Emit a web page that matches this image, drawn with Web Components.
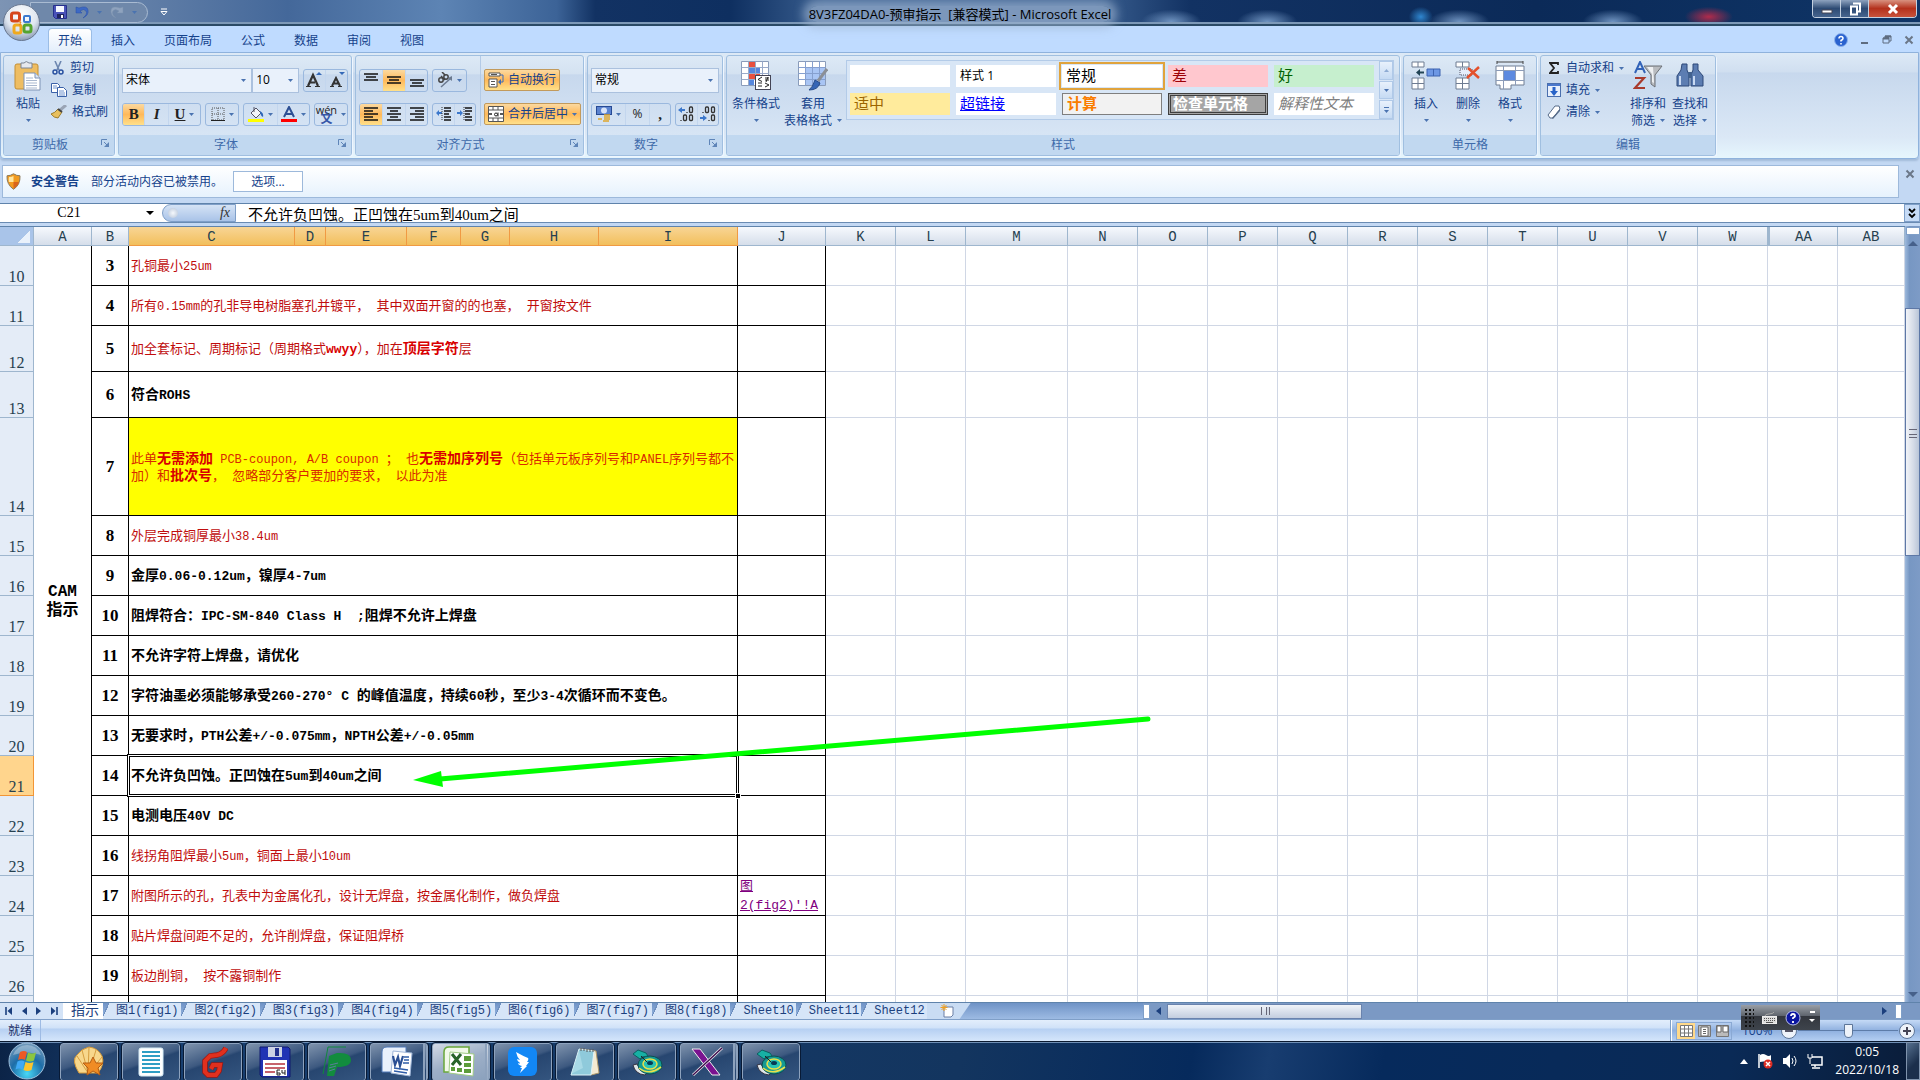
<!DOCTYPE html>
<html lang="zh-CN">
<head>
<meta charset="utf-8">
<title>8V3FZ04DA0-预审指示 [兼容模式] - Microsoft Excel</title>
<style>
  html, body {
    height: 100%;
    margin: 0;
  }
  body {
    background: #c3d8f3;
    color: #15428b;
    font: 12px/16px "Open Sans", "Noto Sans CJK SC", sans-serif;
    overflow: hidden;
  }
</style>
</head>
<body>
<excel-app></excel-app>

<script>
const base = `
  * { box-sizing: border-box; }
  button, input, select { font: inherit; color: inherit; }
  button {
    align-items: center;
    background: none;
    border: 0;
    display: flex;
    justify-content: center;
    padding: 0;
    white-space: nowrap;
  }
  input, select { border-radius: 0; outline: none; }
`;

class Part extends HTMLElement {
  constructor() {
    super();
    this.attachShadow({ mode: 'open' });
    const template = document.createElement('template');
    template.innerHTML = `<style>${base}${this.css()}</style>${this.html()}`;
    this.shadowRoot.appendChild(template.content.cloneNode(true));
  }

  css() { return ''; }

  html() { return '<slot></slot>'; }
}

const lines = (rows) => rows.map(([x1, x2, y]) => `<path d="M${x1} ${y}H${x2}" stroke="#111" stroke-width="1.6"/>`).join('');

const disc = `
  <path d="M2 19q2 9 12 10l3-3q-8-1-11-8z" fill="#dfe6e8" stroke="#334" />
  <ellipse cx="19" cy="19" rx="12" ry="9" fill="#149a94" stroke="#0b4f50"/>
  <path d="M8 22q10 8 22-1" stroke="#e8e04a" stroke-width="1.6" fill="none"/>
  <ellipse cx="19" cy="18" rx="7" ry="5" fill="#28c2b4" stroke="#e8e04a" stroke-width="1.5"/>
  <ellipse cx="19" cy="17" rx="3" ry="2" fill="#063a55"/>
  <path d="M2 8l5-4 8 3 2 3-6 1-2 2z" fill="#17b0a4" stroke="#0b5f60"/><path d="M10 10l6 6" stroke="#222"/>`;

// name: [width, height, markup]
const icons = {
  caret: [5, 3, '<path d="M0 0h5L2.500 3z" fill="#4a73b0"/>'],
  launcher: [8, 8, '<path d="M.5 6V.5H6M3 3l3 3" fill="none" stroke="#5f85b8"/><path d="M8 3v5H3z" fill="#5f85b8"/>'],
  save: [14, 14, '<path d="M.5.5h13v13h-11l-2-2z" fill="#4a53b8" stroke="#26308c"/><path d="M3 1h8v6H3z" fill="#f4f7ff"/><path d="M4 9h7v4H4z" fill="#20265e"/><path d="M8 10h2v3H8z" fill="#fff"/>'],
  undo: [14, 14, '<path d="M1 2v6h6L5 6q4-3 6 0t-3 7q6-3 5-8T4 3z" fill="#3d69c4" stroke="#2a4fa4" stroke-width=".5"/>'],
  redo: [14, 14, '<path d="M13 2v6H7l2-2q-4-3-6 0t3 7Q0 10 1 5t9-2z" fill="#8fa3be" stroke="#7b90ad" stroke-width=".5"/>'],
  qat: [8, 8, '<path d="M1 1h6" stroke="#fff"/><path d="M1 3.500h6L4 7z" fill="none" stroke="#fff"/>'],
  orb: [37, 37, `<defs><radialGradient id="o" cx=".5" cy=".3" r=".7"><stop offset="0" stop-color="#fff"/><stop offset=".6" stop-color="#dfe6f0"/><stop offset="1" stop-color="#8b9bb5"/></radialGradient></defs>
    <circle cx="18.500" cy="18.500" r="18" fill="url(#o)" stroke="#67768f"/>
    <g fill="none" stroke-width="3"><rect x="8.500" y="9" width="8" height="8" rx="2" stroke="#d6461c"/><rect x="11" y="21" width="7" height="8" rx="2" stroke="#f0a91e"/><rect x="21" y="21" width="7" height="7" rx="2" stroke="#54a42f"/></g>
    <rect x="21" y="12" width="6" height="6" rx="1" fill="none" stroke="#3b79cf" stroke-width="2"/><path d="M16 17l2 2M16 21l2-1" stroke="#e98b22" stroke-width="1.500"/>`],
  help: [14, 14, '<circle cx="7" cy="7" r="6.500" fill="#2a62cf" stroke="#8db2ec"/><path d="M5 5.500q0-2 2-2t2 2q0 1-2 2v1M7 10v1.500" stroke="#fff" stroke-width="1.500" fill="none"/>'],
  helpNavy: [16, 16, '<circle cx="8" cy="8" r="7" fill="#0c16a0" stroke="#b8c0ea"/><path d="M6 6q0-2 2-2t2 2q0 1-2 2v1M8 11v2" stroke="#fff" stroke-width="1.800" fill="none"/>'],
  min: [10, 10, '<path d="M1 8h7" stroke="#5e6c80" stroke-width="2"/>'],
  restore: [10, 10, '<path d="M3 3V1h6v5H7M1 3h6v5H1z" fill="none" stroke="#5e6c80"/><path d="M1 3.500h6M3 1.500h6" stroke="#5e6c80" stroke-width="2"/>'],
  close: [10, 10, '<path d="M1.500 1.500l7 7M8.500 1.500l-7 7" stroke="#6b7788" stroke-width="2"/>'],
  wmin: [12, 12, '<path d="M1 7h10v3H1z" fill="#fff" stroke="#445"/>'],
  wrestore: [12, 14, '<path d="M4 1.500h7v8H9" fill="none" stroke="#fff" stroke-width="2"/><path d="M2 4.500h6v8H2z" fill="none" stroke="#fff" stroke-width="2"/>'],
  wclose: [12, 12, '<path d="M2 2l8 8M10 2l-8 8" stroke="#fff" stroke-width="3"/>'],
  paste: [28, 30, '<rect x="1" y="3" width="23" height="25" rx="2" fill="#eebd62" stroke="#c38f35"/><path d="M7 2h3q2-3 5 0h3v5H7z" fill="#e6e9ee" stroke="#7b8594"/><path d="M10 12h11l5 5v12H10z" fill="#fff" stroke="#7e93b5"/><path d="M21 12v5h5" fill="#dbe5f3" stroke="#7e93b5"/><path d="M12 17h7M12 19.500h11M12 22h11M12 24.500h11M12 27h11" stroke="#a9b8cf"/>'],
  cut: [14, 14, '<path d="M4 0l4 9M10 0L6 9" stroke="#6d87b0" stroke-width="1.600"/><circle cx="4" cy="11" r="2" fill="none" stroke="#2850a0" stroke-width="1.500"/><circle cx="10" cy="11" r="2" fill="none" stroke="#2850a0" stroke-width="1.500"/>'],
  copy: [16, 14, '<path d="M.5.5h6l2 2v7h-8z" fill="#fff" stroke="#3b61a8"/><path d="M6.500 4.500h6l3 3v6h-9z" fill="#fff" stroke="#3b61a8"/><path d="M2 3h4M2 5h4M8 8h5M8 10h6M8 12h6" stroke="#6f93cf"/>'],
  brush: [16, 14, '<path d="M15 0l-7 6" stroke="#9aa4b5" stroke-width="3"/><path d="M7 4l4 3-4 6q-4 0-7-4 4-1 7-5z" fill="#e9c05e" stroke="#9c7c2c"/><path d="M7 4l4 3" stroke="#444" stroke-width="2"/>'],
  grow: [16, 16, '<path d="M2 14L7 3l5 11M4 10.500h5" stroke="#333" stroke-width="2.200" fill="none"/><path d="M0 14.500h5M9 14.500h5" stroke="#333"/><path d="M10 3h6l-3-3z" fill="#3569b8"/>'],
  shrink: [16, 16, '<path d="M3 14l4-8 4 8M5 11.500h4" stroke="#333" stroke-width="2" fill="none"/><path d="M1 14.500h4M9 14.500h4" stroke="#333"/><path d="M10 0h6l-3 3z" fill="#3569b8"/>'],
  borders: [14, 14, '<path d="M1 1h12v12H1zM7 1v12M1 7h12" fill="none" stroke="#555" stroke-dasharray="1 1"/><path d="M0 13.500h14" stroke="#222"/>'],
  fill: [16, 16, '<path d="M3 7l5-5 5 5-5 5z" fill="#f2f5fa" stroke="#556"/><path d="M6 1v5" stroke="#556"/><path d="M12 5q4 2 3 6-2-1-3-4z" fill="#2c66b8"/><path d="M0 13h16v3H0z" fill="#ff0"/>'],
  color: [16, 16, '<path d="M3 11L8 1l5 10M5 8h6" stroke="#2c4f94" stroke-width="2" fill="none"/><path d="M0 13h16v3H0z" fill="#f00"/>'],
  top: [16, 16, lines([[1, 15, 2], [3, 13, 5], [1, 15, 8]])],
  middle: [16, 16, lines([[1, 15, 5], [3, 13, 8], [1, 15, 11]])],
  bottom: [16, 16, lines([[1, 15, 8], [3, 13, 11], [1, 15, 14]])],
  left: [16, 14, lines([[1, 15, 1], [1, 10, 4], [1, 15, 7], [1, 10, 10], [1, 15, 13]])],
  center: [16, 14, lines([[1, 15, 1], [4, 12, 4], [1, 15, 7], [4, 12, 10], [1, 15, 13]])],
  right: [16, 14, lines([[1, 15, 1], [6, 15, 4], [1, 15, 7], [6, 15, 10], [1, 15, 13]])],
  outdent: [16, 14, lines([[8, 15, 1], [8, 15, 4], [8, 13, 7], [8, 15, 10], [8, 15, 13]]) + '<path d="M6 3v2h0v2H3v2L0 6l3-3v2h3" fill="#3c78cc"/><path d="M6 0v14" stroke="#333" stroke-dasharray="1 1"/>'],
  indent: [16, 14, lines([[8, 15, 1], [8, 15, 4], [8, 13, 7], [8, 15, 10], [8, 15, 13]]) + '<path d="M0 5h3V3l3 3-3 3V7H0z" fill="#3c78cc"/><path d="M7 0v14" stroke="#333" stroke-dasharray="1 1"/>'],
  orient: [16, 16, '<g fill="none" stroke="#444" stroke-width="1.500"><circle cx="4" cy="8" r="2.200"/><path d="M4 4l4 4"/><circle cx="9" cy="5" r="2.200"/><path d="M5 0l3 3"/><path d="M4 15L14 6" stroke="#6b7a90"/></g><path d="M15 4v5l-4-3z" fill="#6b7a90"/>'],
  wrap: [16, 16, '<path d="M1 1h11v3H1zM1 7h8v8H1z" fill="#fff" stroke="#555"/><path d="M3 9.500h4M3 12.500h4M3 2.500h6" stroke="#555"/><path d="M12 3h3v7h-3" fill="none" stroke="#3c6bb8"/><path d="M13 7v6l-3-3z" fill="#3c6bb8"/>'],
  merge: [16, 16, '<path d="M.5.500h15v15H.5zM.5 4h15M.5 12h15M5 .5V4M10 .5V4M5 12v3.500M10 12v3.500" fill="#fff" stroke="#555"/><path d="M1 8h3M15 8h-3" stroke="#222" stroke-width="1.500"/><circle cx="8" cy="8.500" r="1.500" fill="none" stroke="#222"/><path d="M10 6.500v4" stroke="#222"/>'],
  money: [16, 16, '<rect x=".5" y=".5" width="15" height="8" fill="#5b83cf" stroke="#274a94"/><circle cx="8" cy="4.500" r="3" fill="#d7e3f8"/><path d="M8 9h6M8 11h6M8 13h6M7 15h6M2 13h4" stroke="#e0a62c" stroke-width="1.600"/>'],
  decup: [17, 16, '<path d="M0 4l4-3v2h3v2H4v2z" fill="#3c78cc"/><g fill="none" stroke="#333" stroke-width="1.300"><path d="M9 6v1"/><rect x="11.500" y="1" width="3" height="5.500" rx="1"/><path d="M3 14v1"/><rect x="5.500" y="9" width="3" height="5.500" rx="1"/><rect x="11.500" y="9" width="3" height="5.500" rx="1"/></g>'],
  decdown: [17, 16, '<path d="M7 12l-4-3v2H0v2h3v2z" fill="#3c78cc"/><g fill="none" stroke="#333" stroke-width="1.300"><path d="M3 6v1"/><rect x="5.500" y="1" width="3" height="5.500" rx="1"/><rect x="11.500" y="1" width="3" height="5.500" rx="1"/><path d="M9 14v1"/><rect x="11.500" y="9" width="3" height="5.500" rx="1"/></g>'],
  cond: [30, 30, '<path d="M.5.500h27v24H.5z" fill="#fff" stroke="#8a9cba"/><path d="M7 1h7v6H7zM7 13h12v6H7z" fill="#e8503e"/><path d="M7 7h12v6H7zM7 19h6v5H7z" fill="#5687dd"/><path d="M.5 6.500h27M.5 12.500h27M.5 18.500h27M7.500.5v24M14.500.5v24M21.500.5v24" stroke="#9aabca" fill="none"/><rect x="14.500" y="14.500" width="15" height="14" fill="#fff" stroke="#445"/><path d="M21 16l-4 2.500 4 2M17 22h4M24 17h4M24 19h4M27 16l-2 5M17 25h4M24 22l4 2-4 2" stroke="#222" fill="none"/>'],
  tablefmt: [30, 30, '<path d="M.5.500h27v24H.5z" fill="#fff" stroke="#8a9cba"/><path d="M7 7h20v17H7z" fill="#a9c5f4"/><path d="M.5 6.500h27M.5 12.500h27M.5 18.500h27M7.500.5v24M14.500.5v24M21.500.5v24" stroke="#86a0cf" fill="none"/><path d="M29 8l-9 12" stroke="#8b8f96" stroke-width="3"/><path d="M17 19l5 3q-2 7-11 7 4-3 6-10z" fill="#3565b5" stroke="#264a88"/>'],
  insert: [30, 30, '<path d="M1 1h12v5H1zM1 17h12v11H1zM7 1v5M7 17v11M1 22.500h12" fill="#fff" stroke="#6e7c92"/><path d="M16 8h13v7H16z" fill="#6d97e4" stroke="#3d63b0"/><path d="M22.500 8v7" stroke="#3d63b0"/><path d="M13 11.500H8" stroke="#245" stroke-width="2"/><path d="M9 8v7l-4-3.500z" fill="#245"/>'],
  remove: [26, 30, '<path d="M1 1h13v5H1zM1 17h13v11H1zM7.500 1v5M7.500 17v11M1 22.500h13" fill="#fff" stroke="#6e7c92"/><path d="M5 8h12v6H5z" fill="#e6eefb" stroke="#556" stroke-dasharray="1 1"/><path d="M13 7l11 10M24 6L12 17" stroke="#e4512c" stroke-width="2.500"/>'],
  format: [30, 30, '<path d="M2 1h26M2 0v3M28 0v3" stroke="#444"/><path d="M1 5h28v19H16v4H5v-4H1z" fill="#fff" stroke="#6e7c92"/><path d="M1 9.500h28M1 19.500h28M8.500 5v23M20.500 5v19" stroke="#8b9bb8"/><path d="M9 10h11v9H9z" fill="#5d8ae0"/>'],
  sum: [10, 12, '<path d="M9 3V1H1l4 5-4 5h8V9" fill="none" stroke="#222" stroke-width="1.800"/>'],
  down: [14, 14, '<rect x=".5" y=".5" width="13" height="13" fill="#e8f0fc" stroke="#4a6fae"/><path d="M1 1h12v2H1z" fill="#4a78cc"/><path d="M7 4v5" stroke="#2863c8" stroke-width="3"/><path d="M3 8h8l-4 5z" fill="#2863c8"/>'],
  eraser: [14, 14, '<path d="M1 10l7-9h4l1 3-7 9H3z" fill="#fff" stroke="#556a88"/><path d="M5 13l8-9v2l-7 8z" fill="#556a88"/>'],
  sort: [30, 30, '<path d="M2 12L7 1l5 11M4 8h6" fill="none" stroke="#3263b8" stroke-width="2"/><path d="M2 17h9L2 27h10" fill="none" stroke="#a83a2c" stroke-width="2.200"/><path d="M11 5h18l-7 9v12l-4-3v-9z" fill="#b9bcc0" stroke="#6d7176"/><path d="M14 6h6l1 16-2-1v-8z" fill="#eef0f2"/>'],
  find: [28, 28, '<path d="M6 2h5v6l2 5v11H1V14l4-6zM17 2h5v6l5 6v10H15V13l2-5z" fill="#5c7db2" stroke="#2d4878"/><path d="M4 14v9M18 14v9" stroke="#c9daf3" stroke-width="2"/><path d="M12 10h4v6h-4z" fill="#41618f"/>'],
  shield: [15, 17, '<path d="M7.500.8q3 2 6.500 2 .5 9-6.500 13.500Q.5 11.500 1 2.800q3.500 0 6.500-2z" fill="#f29a1f" stroke="#8c7a5a"/><path d="M3 4q3 0 4.500-1v6H2.800q-.3-3 .2-5z" fill="#ffe6a0"/><path d="M7.500 9H13q-1 4-5.500 6.500z" fill="#d9651b"/>'],
  start: [38, 38, `<defs><radialGradient id="s" cx=".5" cy=".85" r=".9"><stop offset="0" stop-color="#48d8f6"/><stop offset=".5" stop-color="#1d6da8"/><stop offset="1" stop-color="#7fa0bd"/></radialGradient></defs>
    <circle cx="19" cy="19" r="18" fill="url(#s)" stroke="#9fc0dc"/><path d="M5 13Q9 3 19 3t14 10q-14-5-28 0z" fill="#fff" opacity=".3"/>
    <path d="M12 10q4-2 7 0l-2 8q-3-2-7 0z" fill="#ee5a24"/><path d="M20 10.500q4 2 8 0l-2 8q-4 2-8 0z" fill="#8cc63f"/><path d="M9.500 19.500q4-2 7 0l-2 8q-3-2-7 0z" fill="#3fa9f5"/><path d="M17.500 20q4 2 8 0l-2 8q-4 2-8 0z" fill="#fcc42c"/>`],
  shell: [32, 32, '<path d="M6 27Q-2 14 4 9q4-6 12-8 9 1 13 9 3 8-4 17z" fill="#f7d78c" stroke="#d59a3a"/><path d="M15 27L4 10M15 27L9 4M15 27L16 1M16 27l7-23M16 27L29 11" stroke="#d69e40"/><path d="M20 11l3 6 7 0-5 5 2 7-7-4-6 4 1-7-5-5 7 0z" fill="#f08c24" stroke="#b45c12"/>'],
  doc: [26, 30, '<rect x="1" y="1" width="24" height="28" rx="2" fill="#fff" stroke="#d6ecf6"/><path d="M4 5h18M4 9h18M4 13h18M4 17h18M4 21h18M4 25h18" stroke="#2f9ec4" stroke-width="2"/>'],
  gred: [30, 32, '<path d="M28 2q-3 6-9 7l-7 1-5 5v11l3 3h8l3-4 1-6h-7l-2 4" fill="none" stroke="#9b1713" stroke-width="5.500"/><path d="M28 2q-3 6-9 7l-7 1-5 5v11l3 3h8l3-4 1-6h-7l-2 4" fill="none" stroke="#e0301e" stroke-width="4"/>'],
  floppy: [32, 32, '<path d="M1 1h28l2 2v28H3l-2-2z" fill="#2133b4" stroke="#101a6e"/><path d="M9 1h14v10H9z" fill="#ccd2e4"/><path d="M16 2h4v8h-4z" fill="#22308c"/><path d="M4 14h24v16H4z" fill="#fff"/><path d="M6 18h20M6 22h20M6 26h10" stroke="#b5303c" stroke-width="1.500"/><path d="M21 24h-3v5h3v-2h-3M23 24v3h3M26 24v5" fill="none" stroke="#222"/>'],
  pgreen: [32, 32, '<path d="M2 28L7 1h18" fill="none" stroke="#0f8a3c"/><path d="M8 10l8-3q14-1 14 7 0 7-14 7l-3 9H6z" fill="#128c3e"/><path d="M9 19l8-2M8 22l7-2M8 25l6-2" stroke="#5a7f9a"/>'],
  word: [32, 32, '<path d="M1 26V6q0-5 5-5h19v25z" fill="#e9f1fc" stroke="#4f79b8"/><path d="M12 5l19 2-2 23-19-3z" fill="#fff" stroke="#9fb6d8"/><path d="M12 10l2 9 3-8 2 9 3-10" fill="none" stroke="#2a4f94" stroke-width="2.200"/><path d="M23 11h5M23 14h5M22 17h6M13 22l14 2M13 25l13 2" stroke="#2f5da8" stroke-width="1.500"/>'],
  excel: [32, 32, '<path d="M1 26V6q0-5 5-5h20v25z" fill="#f1f9e9" stroke="#6aa83a" stroke-width="1.500"/><path d="M7 6l24 2-1 22-24-3z" fill="#fff" stroke="#9fcb84"/><path d="M21 10h7v5h-7zM21 17h7v4h-7zM21 23h7v4h-7zM14 22h5v4h-5zM8 21h4v4H8z" fill="#5c9c3a"/><path d="M9 8l9 11M18 8L9 19" stroke="#28632a" stroke-width="3"/>'],
  ding: [30, 30, '<rect width="29" height="29" rx="6" fill="#1287f5"/><path d="M8 5q7 4 12 6 1 1-1 4l2 0-3 4 1 0-7 7 2-5-2 0 2-2q-4-1-4-3 2 1 2 0-3-2-3-4l3 1q-3-3-4-8z" fill="#fff"/>'],
  note: [32, 32, '<path d="M11 3l16 2 3 22-8 2z" fill="#f3ead2" stroke="#b09a6a"/><path d="M10 3l15 2-3 24H2z" fill="#8fcadb" stroke="#dff3f8"/><path d="M10 4l4 18-12 6z" fill="#b9e2ec" opacity=".6"/><path d="M12 2v3M15 2v3M18 3v3M21 3v3M24 3v3" stroke="#555"/>'],
  disc: [32, 32, disc],
  xman: [32, 30, '<path d="M1 2h8l20 26h-8z" fill="#7a1290" stroke="#eee"/><path d="M31 1L2 28" stroke="#eee" stroke-width="3"/><path d="M31 1L2 28" stroke="#3b0a4c" stroke-width="1.400"/>'],
  up: [8, 5, '<path d="M0 5h8L4 0z" fill="#fff"/>'],
  flag: [16, 16, '<path d="M2 1v14" stroke="#fff" stroke-width="1.500"/><path d="M3 2q3-2 6 0t5 0v7q-3 1-5 0T3 9z" fill="#fff"/><circle cx="11" cy="11" r="4.500" fill="#dc2c22"/><path d="M9 9l4 4M13 9l-4 4" stroke="#fff" stroke-width="1.500"/>'],
  volume: [16, 16, '<path d="M1 5h3l4-4v14l-4-4H1z" fill="#fff"/><path d="M10 5q2 3 0 6M12 3q4 5 0 10" stroke="#fff" fill="none"/>'],
  network: [16, 16, '<path d="M5 4h10v8H4M8 12v2M5 15h8" fill="none" stroke="#fff" stroke-width="1.500"/><path d="M1 1v4h4V1M3 5v6" fill="none" stroke="#fff"/>'],
  keyboard: [15, 12, '<path d="M3 4q0-2 4-2t5-2" stroke="#aaa" fill="none"/><rect x=".5" y="4.500" width="14" height="7" fill="#ddd" stroke="#eee"/><path d="M2 6.500h11M2 8.500h11" stroke="#555" stroke-dasharray="1 1"/><path d="M4 10.500h7" stroke="#555"/>'],
  first: [8, 8, '<path d="M1 0v8" stroke="#1b3f7d" stroke-width="1.600"/><path d="M7 0v8L2.500 4z" fill="#1b3f7d"/>'],
  prev: [5, 8, '<path d="M5 0v8L0 4z" fill="#1b3f7d"/>'],
  next: [5, 8, '<path d="M0 0v8l5-4z" fill="#1b3f7d"/>'],
  last: [8, 8, '<path d="M7 0v8" stroke="#1b3f7d" stroke-width="1.600"/><path d="M1 0v8l4.500-4z" fill="#1b3f7d"/>'],
  newsheet: [14, 14, '<path d="M4 3h9v8l-2 2H4z" fill="#fff" stroke="#6a7fa5"/><path d="M4 0v7M.5 3.500h7M1.500 1l5 5M6.500 1l-5 5" stroke="#f0a020"/>'],
  vnormal: [13, 12, '<path d="M.5.500h12v11H.5zM.5 4h12M.5 8h12M4.500.5v11M8.500.5v11" fill="#fff" stroke="#777"/>'],
  vlayout: [13, 12, '<path d="M.5.500h12v11H.5z" fill="#bbb" stroke="#777"/><path d="M3 2h7v9H3z" fill="#fff" stroke="#666"/><path d="M5 4.500h3M5 6.500h3M5 8.500h3" stroke="#666"/>'],
  vbreak: [13, 12, '<path d="M.5.500h12v11H.5z" fill="#bbb" stroke="#777"/><path d="M1 1h4v6H1zM7 1h5v6H7z" fill="#fff" stroke="#666"/>'],
  minus: [18, 18, '<circle cx="9" cy="9" r="7.500" fill="#eef3fa" stroke="#5d7699"/><path d="M5 9h8" stroke="#556" stroke-width="2"/>'],
  plus: [18, 18, '<circle cx="9" cy="9" r="7.500" fill="#eef3fa" stroke="#5d7699"/><path d="M5 9h8M9 5v8" stroke="#445" stroke-width="2"/>'],
  chevrons: [8, 11, '<path d="M1 1l3 3 3-3M1 6l3 3 3-3" fill="none" stroke="#000" stroke-width="1.800"/>'],
};

class UiIcon extends Part {
  css() { return ':host { display: inline-flex; flex: none; } svg { display: block; }'; }

  html() { return ''; }

  connectedCallback() {
    const [w, h, body] = icons[this.getAttribute('name')];
    const box = document.createElement('template');
    box.innerHTML = `<svg width="${w}" height="${h}" viewBox="0 0 ${w} ${h}" aria-hidden="true">${body}</svg>`;
    this.shadowRoot.appendChild(box.content);
  }
}

const icon = (name) => `<ui-icon name="${name}"></ui-icon>`;
const caret = icon('caret');

class TitleBar extends Part {
  css() {
    return `
      :host {
        align-items: center;
        background:
          radial-gradient(ellipse 30px 12px at 61% 90%, #6f93c0 0, transparent 100%),
          radial-gradient(ellipse 30px 12px at 76% 90%, #6f93c0 0, transparent 100%),
          radial-gradient(ellipse 30px 12px at 84% 90%, #6f93c0 0, transparent 100%),
          radial-gradient(ellipse 24px 10px at 89% 70%, #b02b4b 0, transparent 100%),
          radial-gradient(ellipse 12px 10px at 74% 70%, #2f86cf 0, transparent 100%),
          radial-gradient(ellipse 30px 12px at 66% 90%, #6f93c0 0, transparent 100%),
          linear-gradient(90deg, #7d94b4 0, #44689a 15%, #5d84b4 23%, #3c6397 29%, #123263 31%, #0e2f60 38%, #3a5f90 43%, #3a5f90 57%, #123263 62%, #0b2a58 80%, #0f3567);
        border-bottom: 2px solid #2a4a66;
        box-shadow: inset 0 -2px #7d99b8;
        display: grid;
        flex: none;
        grid-template-columns: 1fr auto 1fr;
        height: 26px;
        position: relative;
      }
      .orb { left: 3px; position: absolute; top: 4px; z-index: 2; }
      .quick { align-items: center; display: flex; gap: 12px; }
      .tools {
        align-items: center;
        background: #6f88aa;
        border: 1px solid #a9bbd2;
        border-radius: 0 11px 11px 0;
        display: flex;
        gap: 8px;
        height: 21px;
        margin-left: 30px;
        padding: 0 10px 0 22px;
      }
      h1 {
        background: #9db4d0aa;
        border-radius: 10px;
        box-shadow: 0 0 10px 6px #9db4d0aa;
        color: #000;
        font-size: 13px;
        font-weight: 400;
        line-height: 16px;
        margin: 3px 0 0;
        white-space: pre;
      }
      .window {
        align-self: start;
        border: 1px solid #c3d0e0;
        border-radius: 0 0 4px 4px;
        border-top: 0;
        display: flex;
        height: 18px;
        justify-self: end;
        margin-right: 3px;
        overflow: hidden;
      }
      .window button { background: linear-gradient(#8ea3bf, #2d4a73 50%, #46648e); border-right: 1px solid #c3d0e0; width: 28px; }
      .window .close { background: linear-gradient(#d8917f, #b4311c 50%, #c8533c); border: 0; width: 47px; }
    `;
  }

  html() {
    return `
      <button class="orb" aria-label="Office">${icon('orb')}</button>
      <div class="quick">
        <div class="tools">
          <button aria-label="保存">${icon('save')}</button>
          <button aria-label="撤消">${icon('undo')}</button>${caret}
          <button aria-label="恢复">${icon('redo')}</button>${caret}
        </div>
        <button aria-label="自定义">${icon('qat')}</button>
      </div>
      <h1>8V3FZ04DA0-预审指示  [兼容模式] - Microsoft Excel</h1>
      <div class="window">
        <button aria-label="最小化">${icon('wmin')}</button>
        <button aria-label="还原">${icon('wrestore')}</button>
        <button class="close" aria-label="关闭">${icon('wclose')}</button>
      </div>`;
  }
}

class RibbonTabs extends Part {
  css() {
    return `
      :host { background: #bfdbff; display: flex; flex: none; height: 26px; justify-content: space-between; padding: 2px 6px 0 48px; }
      nav { display: flex; gap: 9px; }
      nav button { border: 1px solid transparent; border-bottom: 0; border-radius: 4px 4px 0 0; padding: 0 9px; }
      .on { background: linear-gradient(#fff, #e3eefb); border-color: #9bbde6; }
      .right { align-items: center; display: flex; gap: 12px; }
    `;
  }

  html() {
    const tabs = ['开始', '插入', '页面布局', '公式', '数据', '审阅', '视图'];
    return `
      <nav>${tabs.map((t, i) => `<button class="${i ? '' : 'on'}">${t}</button>`).join('')}</nav>
      <div class="right">
        <button aria-label="帮助">${icon('help')}</button>
        <button aria-label="最小化窗口">${icon('min')}</button>
        <button aria-label="还原窗口">${icon('restore')}</button>
        <button aria-label="关闭窗口">${icon('close')}</button>
      </div>`;
  }
}

class RibbonGroup extends Part {
  css() {
    return `
      :host {
        background: linear-gradient(#dde9f6, #d4e2f1 18%, #c7d8ed 19%, #dce9f7);
        border: 1px solid #a0bfe0;
        border-radius: 3px;
        box-shadow: 1px 1px #eef6ff;
        display: flex;
        flex-direction: column;
        flex: none;
        height: 101px;
        overflow: hidden;
      }
      .body { flex: 1; }
      footer {
        align-items: center;
        background: #c1d8f0;
        color: #3e6aaa;
        display: flex;
        height: 20px;
        justify-content: center;
        position: relative;
      }
      :host([launcher]) footer { padding-right: 18px; }
      footer button { position: absolute; right: 5px; top: 4px; }
    `;
  }

  html() { return '<div class="body"><slot></slot></div><footer></footer>'; }

  connectedCallback() {
    const label = this.getAttribute('label');
    const launcher = this.hasAttribute('launcher') ? `<button aria-label="${label}选项">${icon('launcher')}</button>` : '';
    this.shadowRoot.querySelector('footer').innerHTML = `<span>${label}</span>${launcher}`;
  }
}

class StyleGallery extends Part {
  css() {
    return `
      :host { background: #d8e6f6; border: 1px solid #b3cbe8; display: flex; height: 60px; padding-left: 3px; }
      .grid { display: grid; gap: 6px; grid-template-columns: repeat(5, 100px); grid-template-rows: 22px 22px; padding: 4px 5px 0 0; }
      .grid button { background: #fff; color: #000; font: 15px/20px "Liberation Serif", "Noto Sans CJK SC", sans-serif; justify-content: start; padding-left: 4px; }
      .grid .ui { font: 12px/20px "Open Sans", "Noto Sans CJK SC", sans-serif; }
      .grid .on { outline: 2px solid #e0a33c; outline-offset: 1px; }
      .grid .mid { background: #ffeb9c; color: #9c6500; }
      .grid .link { color: #00f; text-decoration: underline; }
      .grid .calc { background: #f2f2f2; border: 1px solid #7f7f7f; color: #fa7d00; font-weight: 700; }
      .grid .bad { background: #ffc7ce; color: #9c0006; }
      .grid .good { background: #c6efce; color: #006100; }
      .grid .check { background: #a5a5a5; border: 3px double #3f3f3f; color: #fff; font-weight: 700; padding-left: 2px; }
      .grid .note { color: #7f7f7f; font-style: italic; }
      .scroll { display: flex; flex-direction: column; gap: 1px; }
      .scroll button { background: linear-gradient(#e8f1fc, #c5daf3); border: 1px solid #b0c9e8; flex: 1; width: 14px; }
      .scroll button:first-child ui-icon { opacity: .5; rotate: 180deg; }
      .scroll button:last-child ui-icon { border-top: 1px solid #4a73b0; padding-top: 2px; }
    `;
  }

  html() {
    return `
      <div class="grid">
        <button aria-label="空白样式"></button><button class="ui">样式 1</button><button class="on">常规</button>
        <button class="bad">差</button><button class="good">好</button>
        <button class="mid">适中</button><button class="link">超链接</button><button class="calc">计算</button>
        <button class="check">检查单元格</button><button class="note">解释性文本</button>
      </div>
      <div class="scroll">
        <button aria-label="上一行">${caret}</button>
        <button aria-label="下一行">${caret}</button>
        <button aria-label="其他">${caret}</button>
      </div>`;
  }
}

class RibbonBar extends Part {
  css() {
    return `
      :host {
        background: linear-gradient(#dde9f6, #d0dff0 18%, #c7d8ed 19%, #dbe8f6 80%, #e6f6fd);
        border: 1px solid #8fb2dc;
        border-radius: 0 0 4px 4px;
        box-shadow: 0 2px 2px #a3bbd9;
        display: flex;
        flex: none;
        gap: 3px;
        height: 107px;
        margin-right: 1px;
        padding: 2px 2px 0;
        white-space: nowrap;
      }
      .row { align-items: center; display: flex; }
      .stack { display: flex; flex-direction: column; gap: 10px; padding: 12px 3px 0; }
      .line { align-items: center; display: flex; gap: 4px; height: 24px; }
      .set { border: 1px solid #9ab8de; border-radius: 3px; display: flex; height: 23px; overflow: hidden; }
      .set button { gap: 4px; width: 30px; }
      .set button + button { border-left: 1px solid #c3d6ee; }
      .set button.drop { width: 33px; }
      .set .on, .hot { background: linear-gradient(#fbd9a0, #ffb95a 50%, #ffe08a); }
      .hot { border: 1px solid #c29a5c; border-radius: 2px; gap: 4px; height: 22px; padding: 0 3px; }
      .bold { font: 700 15px "Liberation Serif", serif; color: #222; }
      select {
        appearance: none;
        background: #e9f1fb;
        border: 1px solid #abc1de;
        color: #000;
        flex: 1;
        height: 25px;
        padding: 0 3px;
        width: 100%;
      }
      .combo { align-items: center; display: flex; position: relative; }
      .combo + .combo { margin-left: -4px; }
      .combo ui-icon { position: absolute; right: 6px; }
      .small { display: flex; flex-direction: column; padding-top: 1px; }
      .small button { gap: 5px; height: 22px; justify-content: start; }
      .small ui-icon { justify-content: center; min-width: 14px; }
      .small .c { min-width: 0; }
      .big { align-items: center; flex-direction: column; gap: 0; line-height: 17px; padding-top: 5px; }
      .big > ui-icon:first-child { align-items: center; height: 30px; margin-bottom: 4px; }
      .big span { align-items: center; display: flex; gap: 5px; height: 17px; }
      .wen { flex-direction: column; font-size: 11px; line-height: 9px; color: #222; }
      .wen b { color: #3556a8; font-size: 12px; }
    `;
  }

  html() {
    const big = (name, first, second = '', drop = true) => `
      <button class="big">${icon(name)}<span>${first}</span><span>${second}${drop ? caret : ''}</span></button>`;
    return `
      <ribbon-group label="剪贴板" launcher style="width:112px">
        <div class="row" style="gap:9px;padding-left:10px;align-items:start">
          ${big('paste', '粘贴')}
          <div class="small">
            <button>${icon('cut')}剪切</button>
            <button>${icon('copy')}复制</button>
            <button>${icon('brush')}格式刷</button>
          </div>
        </div>
      </ribbon-group>

      <ribbon-group label="字体" launcher style="width:234px">
        <div class="stack">
          <div class="line">
            <div class="combo" style="width:132px"><select aria-label="字体"><option>宋体</option></select>${caret}</div>
            <div class="combo" style="width:47px"><select aria-label="字号"><option>10</option></select>${caret}</div>
            <div class="set"><button style="width:22px" aria-label="增大字号">${icon('grow')}</button><button style="width:22px" aria-label="减小字号">${icon('shrink')}</button></div>
          </div>
          <div class="line">
            <div class="set"><button class="on bold" style="width:22px">B</button><button class="bold" style="width:24px"><i>I</i></button><button class="bold drop"><u>U</u>${caret}</button></div>
            <div class="set"><button class="drop" aria-label="边框">${icon('borders')}${caret}</button></div>
            <div class="set"><button class="drop" aria-label="填充颜色">${icon('fill')}${caret}</button><button class="drop" aria-label="字体颜色">${icon('color')}${caret}</button></div>
            <div class="set"><button class="drop"><span class="wen">wén<br><b>文</b></span>${caret}</button></div>
          </div>
        </div>
      </ribbon-group>

      <ribbon-group label="对齐方式" launcher style="width:229px">
        <div class="row">
          <div class="stack" style="padding-right:4px">
            <div class="line">
              <div class="set"><button style="width:22px" aria-label="顶端对齐">${icon('top')}</button><button class="on" style="width:23px" aria-label="垂直居中">${icon('middle')}</button><button style="width:22px" aria-label="底端对齐">${icon('bottom')}</button></div>
              <div class="set"><button class="drop" aria-label="方向">${icon('orient')}${caret}</button></div>
            </div>
            <div class="line">
              <div class="set"><button class="on" style="width:22px" aria-label="左对齐">${icon('left')}</button><button style="width:23px" aria-label="居中">${icon('center')}</button><button style="width:22px" aria-label="右对齐">${icon('right')}</button></div>
              <div class="set"><button style="width:21px" aria-label="减少缩进">${icon('outdent')}</button><button style="width:21px" aria-label="增加缩进">${icon('indent')}</button></div>
            </div>
          </div>
          <div class="stack" style="border-left:1px solid #b3cae6;padding-left:3px">
            <div class="line"><button class="hot">${icon('wrap')}自动换行</button></div>
            <div class="line"><button class="hot">${icon('merge')}合并后居中${caret}</button></div>
          </div>
        </div>
      </ribbon-group>

      <ribbon-group label="数字" launcher style="width:136px">
        <div class="stack">
          <div class="line"><div class="combo" style="flex:1"><select aria-label="数字格式"><option>常规</option></select>${caret}</div></div>
          <div class="line">
            <div class="set"><button class="drop" aria-label="会计数字格式">${icon('money')}${caret}</button><button style="width:24px;color:#222">%</button><button class="bold" style="width:21px">,</button></div>
            <div class="set"><button style="width:21px" aria-label="增加小数位数">${icon('decup')}</button><button style="width:21px" aria-label="减少小数位数">${icon('decdown')}</button></div>
          </div>
        </div>
      </ribbon-group>

      <ribbon-group label="样式" style="width:674px">
        <div class="row" style="align-items:start;gap:4px;padding-left:5px">
          ${big('cond', '条件格式')}
          ${big('tablefmt', '套用', '表格格式')}
          <style-gallery style="margin-top:4px"></style-gallery>
        </div>
      </ribbon-group>

      <ribbon-group label="单元格" style="width:134px">
        <div class="row" style="gap:14px;padding-left:7px">
          ${big('insert', '插入')}${big('remove', '删除')}${big('format', '格式')}
        </div>
      </ribbon-group>

      <ribbon-group label="编辑" style="width:176px">
        <div class="row" style="align-items:start;gap:6px;padding-left:6px">
          <div class="small">
            <button>${icon('sum')}自动求和<ui-icon class="c" name="caret"></ui-icon></button>
            <button>${icon('down')}填充<ui-icon class="c" name="caret"></ui-icon></button>
            <button>${icon('eraser')}清除<ui-icon class="c" name="caret"></ui-icon></button>
          </div>
          ${big('sort', '排序和', '筛选')}${big('find', '查找和', '选择')}
        </div>
      </ribbon-group>`;
  }
}

class MessageBar extends Part {
  css() {
    return `
      :host { display: flex; flex: none; gap: 6px; padding: 6px 5px 5px 2px; }
      .box {
        align-items: center;
        background: linear-gradient(#fff, #e6f2fd);
        border: 1px solid #9db9db;
        display: flex;
        flex: 1;
        height: 33px;
        padding-left: 3px;
      }
      b { margin: 0 12px 0 10px; }
      .box button { background: #fff; border: 1px solid #9db9db; height: 21px; margin-left: 10px; width: 70px; }
      .x { align-self: start; height: 18px; }
    `;
  }

  html() {
    return `
      <div class="box">${icon('shield')}<b>安全警告</b><span>部分活动内容已被禁用。</span><button>选项...</button></div>
      <button class="x" aria-label="关闭消息栏">${icon('close')}</button>`;
  }
}

class FormulaBar extends Part {
  css() {
    return `
      :host {
        background: #fff;
        border-bottom: 1px solid #6a8bb2;
        border-top: 1px solid #5f83ab;
        color: #000;
        display: flex;
        flex: none;
        height: 20px;
        margin-bottom: 3px;
      }
      input { background: none; border: 0; height: 18px; padding: 0; }
      .name { font: 14px "Liberation Serif", serif; text-align: center; width: 138px; }
      .drop { width: 24px; }
      .drop::after { border: 4px solid transparent; border-top-color: #000; content: ''; margin-top: 4px; }
      .fn {
        align-items: center;
        background: linear-gradient(#d5e3f5, #a9c3e8);
        border: 1px solid #7f9fc8;
        border-radius: 10px 0 0 10px;
        display: flex;
        justify-content: space-between;
        padding: 0 5px;
        width: 74px;
      }
      .fn::before { background: radial-gradient(#f5f8fc, #b4c3d8); border-radius: 50%; content: ''; height: 10px; width: 10px; }
      .fn button { color: #333; font: italic 14px "Liberation Serif", serif; }
      .text { flex: 1; font: 15px "Liberation Serif", "Noto Sans CJK SC", sans-serif; min-width: 0; padding-left: 12px; }
      .more { background: #c6dbf6; border: 1px solid #7f9fc8; width: 16px; }
    `;
  }

  html() {
    return `
      <input class="name" aria-label="名称框" value="C21"><button class="drop" aria-label="名称列表"></button>
      <div class="fn"><button aria-label="插入函数">fx</button></div>
      <input class="text" aria-label="编辑栏" value="不允许负凹蚀。正凹蚀在5um到40um之间">
      <button class="more" aria-label="展开编辑栏">${icon('chevrons')}</button>`;
  }
}

const columns = [
  ['A', 58], ['B', 37], ['C', 166], ['D', 31], ['E', 81], ['F', 54], ['G', 49], ['H', 89], ['I', 139], ['J', 88],
  ['K', 70], ['L', 70], ['M', 102], ['N', 70], ['O', 70], ['P', 70], ['Q', 70], ['R', 70], ['S', 70], ['T', 70],
  ['U', 70], ['V', 70], ['W', 70], ['AA', 70], ['AB', 0],
];

// [row, height, number, text, class]
const rows = [
  [10, 40, 3, '孔铜最小25um', 'red'],
  [11, 40, 4, '所有0.15mm的孔非导电树脂塞孔并镀平， 其中双面开窗的的也塞， 开窗按文件', 'red'],
  [12, 46, 5, '加全套标记、周期标记（周期格式*wwyy*），加在*顶层字符*层', 'red'],
  [13, 46, 6, '符合ROHS', 'strong'],
  [14, 98, 7, '此单*无需添加* PCB-coupon, A/B coupon ； 也*无需加序列号*（包括单元板序列号和PANEL序列号都不加）和*批次号*， 忽略部分客户要加的要求， 以此为准', 'red yellow'],
  [15, 40, 8, '外层完成铜厚最小38.4um', 'red'],
  [16, 40, 9, '金厚0.06-0.12um，镍厚4-7um', 'strong'],
  [17, 40, 10, '阻焊符合：IPC-SM-840 Class H  ;阻焊不允许上焊盘', 'strong'],
  [18, 40, 11, '不允许字符上焊盘，请优化', 'strong'],
  [19, 40, 12, '字符油墨必须能够承受260-270° C 的峰值温度，持续60秒，至少3-4次循环而不变色。', 'strong'],
  [20, 40, 13, '无要求时，PTH公差+/-0.075mm，NPTH公差+/-0.05mm', 'strong'],
  [21, 40, 14, '不允许负凹蚀。正凹蚀在5um到40um之间', 'strong active'],
  [22, 40, 15, '电测电压40V DC', 'strong'],
  [23, 40, 16, '线拐角阻焊最小5um，铜面上最小10um', 'red'],
  [24, 40, 17, '附图所示的孔，孔表中为金属化孔，设计无焊盘，按金属化制作，做负焊盘', 'red'],
  [25, 40, 18, '贴片焊盘间距不足的，允许削焊盘，保证阻焊桥', 'red'],
  [26, 40, 19, '板边削铜， 按不露铜制作', 'red'],
  ['', 40, '', '', 'red'],
];

// half-width runs get their own narrower face, *...* is bold
const rich = (text) => text
  .replace(/[ -)+-~°]+/g, '<span>$&</span>')
  .replace(/\*(.*?)\*/g, '<b>$1</b>');

class SheetGrid extends Part {
  css() {
    return `
      :host { display: grid; flex: 1; grid-template-columns: 1fr 15px; min-height: 0; overflow: hidden; }
      .view { background: #fff; border-top: 1px solid #5f83ab; min-height: 0; overflow: hidden; }
      table { border-collapse: separate; border-spacing: 0; color: #000; table-layout: fixed; width: 100%; }
      th, td { border: 0 solid #d0d7e5; border-width: 0 1px 1px 0; padding: 0; }
      th { color: #26404f; font: 16px/16px "Liberation Serif", serif; }
      thead th { background: linear-gradient(#f6f9fd, #d5deea); border-color: #9eb6ce; font: 14px/16px "Liberation Mono", monospace; height: 19px; overflow: hidden; padding-top: 2px; }
      thead .sel { background: linear-gradient(#f8d595, #f2bf5c); border-color: #f09a43; }
      thead .hidden { border-left: 2px solid #9eb6ce; }
      .corner { background: linear-gradient(135deg, transparent 50%, #e9f1fb 50%) 17px 4px / 13px 12px no-repeat #a9c4e9; }
      tbody th { background: #e4ecf7; border-color: #9eb6ce; vertical-align: bottom; }
      tbody th.sel { background: #ffd58d; border-color: #f29536; }
      .side { border-color: #000; font: 700 16px/19px "Liberation Mono", "Noto Sans CJK SC", sans-serif; padding-bottom: 78px; text-align: center; }
      .num, .text, .ref { border-color: #000; }
      .num { font: 700 17px/18px "Liberation Serif", serif; text-align: center; }
      .text { font: 13px/17px "Liberation Serif", "Noto Sans CJK SC", sans-serif; padding: 0 2px; white-space: pre-wrap; }
      .text span { font: 12px/12px "Liberation Mono", monospace; }
      .text b { font-size: 14px; }
      .text b span, .strong span { font-size: 13px; font-weight: 700; }
      .red { color: #c00d0d; }
      .red b { color: #d80000; }
      .strong { font-size: 14px; font-weight: 700; }
      .yellow { background: #ff0; color: #d82a00; }
      .active { position: relative; }
      .active::before { border: 1px solid #000; box-shadow: inset 0 0 0 1px #fff, inset 0 0 0 2px #000; content: ''; inset: -2px; position: absolute; }
      .active::after { background: #000; bottom: -3px; content: ''; height: 4px; outline: 1px solid #fff; position: absolute; right: -3px; width: 4px; }
      .ref a { color: #800080; display: block; font: 13px/19px "Liberation Mono", "Noto Sans CJK SC", monospace; padding-left: 2px; }
      .bar { align-items: center; background: linear-gradient(90deg, #9db9dc, #7797c3 30%, #7d9bc6); display: flex; flex-direction: column; padding-top: 1px; }
      .split { background: #fff; border: 1px solid #7f9fc8; height: 8px; width: 14px; }
      .bar i { border: 5px solid transparent; }
      .bar .up { border-bottom-color: #46608a; margin-top: 1px; }
      .bar .down { border-top-color: #46608a; margin-top: auto; }
      .thumb { align-items: center; background: linear-gradient(90deg, #f2f4f8, #d3dae6 60%, #b9c5d8); border: 1px solid #5e78a6; display: flex; height: 248px; justify-content: center; margin-top: 62px; width: 15px; }
      .thumb::after { border-bottom: 1px solid #667; border-top: 1px solid #667; box-shadow: 0 2px #d3dae6, 0 3px #667; content: ''; height: 4px; width: 8px; }
    `;
  }

  html() {
    const cols = columns.map(([, w]) => (w ? `<col style="width:${w}px">` : '<col>')).join('');
    const head = columns.map(([name], i) => {
      const cls = i >= 2 && i <= 8 ? 'sel' : (name === 'AA' ? 'hidden' : '');
      return `<th class="${cls}">${name}</th>`;
    }).join('');
    const empty = '<td></td>'.repeat(columns.length - 10);
    const body = rows.map(([row, height, number, text, cls], i) => `
      <tr style="height:${height}px">
        <th class="${row === 21 ? 'sel' : ''}">${row}</th>
        ${i ? '' : `<td class="side" rowspan="${rows.length}">CAM<br>指示</td>`}
        <td class="num">${number}</td>
        <td class="text ${cls}" colspan="7">${rich(text)}</td>
        <td class="ref">${row === 24 ? '<a href="#fig2">图<br>2(fig2)\'!A</a>' : ''}</td>
        ${empty}
      </tr>`).join('');
    return `
      <div class="view">
        <table>
          <colgroup><col style="width:34px">${cols}</colgroup>
          <thead><tr><th class="corner"></th>${head}</tr></thead>
          <tbody>${body}</tbody>
        </table>
      </div>
      <div class="bar"><div class="split"></div><i class="up"></i><div class="thumb"></div><i class="down"></i></div>`;
  }
}

class SheetTabs extends Part {
  css() {
    return `
      :host {
        background: linear-gradient(#6f93c6, #9dbbe3);
        border-top: 1px solid #5f83ab;
        display: grid;
        flex: none;
        grid-template-columns: 147fr 100fr;
        height: 17px;
        overflow: hidden;
      }
      .tabs, .scroll, .nav { display: flex; min-width: 0; }
      .nav { align-items: center; background: #d3e3f7; flex: none; gap: 9px; padding: 0 5px; width: 63px; }
      .tabs button { color: #1b3f7d; font: 12px/14px "Liberation Mono", "Noto Sans CJK SC", monospace; }
      .tabs .tab { background: linear-gradient(115deg, transparent 5px, #6d8fc0 5px, #6d8fc0 6px, #d6e5f8 6px); padding: 0 2px 0 13px; }
      .tabs .tab.fig { padding-right: 3px; }
      .tabs .tab.on { background: #fff; font-size: 14px; padding: 0 4px 0 8px; }
      .tabs .new { padding: 0 12px 0 8px; background: #c9dcf3; clip-path: polygon(0 0, 100% 0, 75% 100%, 0 100%); width: 44px; }
      .scroll { align-items: center; background: #7b99c4; }
      .split { background: #fff; border: 1px solid #7f9fc8; height: 15px; width: 7px; }
      .scroll .thumb { background: linear-gradient(#f0f3f8, #c3cedf); border: 1px solid #6a83ad; height: 15px; line-height: 12px; text-align: center; width: 195px; }
      .thumb::after { border: solid #667; border-width: 0 1px; box-shadow: 2px 0 #d3dae6, 3px 0 #667; content: ''; display: inline-block; height: 8px; vertical-align: middle; width: 4px; }
      .scroll ui-icon { margin: 0 6px; }
      .end { display: flex; margin-left: auto; margin-right: 18px; }
      .end ui-icon { align-self: center; margin-right: 8px; }
    `;
  }

  html() {
    const figs = [1, 2, 3, 4, 5, 6, 7, 8].map((n) => `<button class="tab fig">图${n}(fig${n})</button>`).join('');
    const sheets = [10, 11, 12].map((n) => `<button class="tab">Sheet${n}</button>`).join('');
    return `
      <div class="tabs">
        <div class="nav">${icon('first')}${icon('prev')}${icon('next')}${icon('last')}</div>
        <button class="tab on">指示</button>${figs}${sheets}
        <button class="new" aria-label="插入工作表">${icon('newsheet')}</button>
      </div>
      <div class="scroll">
        <div class="split"></div>${icon('prev')}<div class="thumb"></div>
        <div class="end">${icon('next')}<div class="split"></div></div>
      </div>`;
  }
}

class StatusBar extends Part {
  css() {
    return `
      :host {
        background: linear-gradient(#e3eefc, #cfe1f8 40%, #b5cff2 41%, #d5e6fb);
        border-top: 1px solid #7f9fc8;
        display: flex;
        flex: none;
        height: 22px;
        justify-content: space-between;
      }
      .state { align-items: center; border-right: 1px solid #9ebbe4; color: #1b2f66; display: flex; padding: 0 8px; }
      .right {
        align-items: center;
        background: linear-gradient(#c5daf6, #8fb0df 50%, #b4cff2);
        border-left: 1px solid #fff;
        box-shadow: -1px 0 #7f9fc8;
        display: flex;
        padding: 0 4px;
        width: 249px;
      }
      .views { border: 1px solid #8aa9d4; display: flex; height: 18px; margin-right: 10px; }
      .views button { width: 18px; }
      .views .on { background: #ffd98a; }
      input { appearance: none; background: linear-gradient(#5d7ca8, #5d7ca8) center / 100% 1px no-repeat; flex: 1; height: 16px; margin: 0; min-width: 0; }
      input::-webkit-slider-thumb { appearance: none; background: #eef3fa; border: 1px solid #5d7699; border-radius: 1px 1px 5px 5px; height: 14px; width: 9px; }
      span { width: 38px; }
    `;
  }

  html() {
    return `
      <div class="state">就绪</div>
      <div class="right">
        <div class="views">
          <button class="on" aria-label="普通">${icon('vnormal')}</button>
          <button aria-label="页面布局">${icon('vlayout')}</button>
          <button aria-label="分页预览">${icon('vbreak')}</button>
        </div>
        <span>100%</span>
        <button aria-label="缩小">${icon('minus')}</button>
        <input type="range" aria-label="显示比例" min="0" max="100" value="50">
        <button aria-label="放大">${icon('plus')}</button>
      </div>`;
  }
}

class LanguageBar extends Part {
  css() {
    return `
      :host {
        align-items: center;
        background: linear-gradient(#9a9fa6, #5c626b 45%, #33373e 46%, #3e444c);
        display: flex;
        height: 25px;
        justify-content: space-between;
        padding: 0 5px 0 4px;
        width: 79px;
      }
      .grip { background: radial-gradient(circle at 1px 1px, #111 1px, transparent 1px) 0 0 / 4px 4px; height: 18px; width: 9px; }
      .opts { display: flex; flex-direction: column; gap: 6px; }
      .opts::before { background: #fff; content: ''; height: 2px; width: 5px; }
      .opts::after { border: 3px solid transparent; border-top-color: #fff; content: ''; height: 0; width: 0; }
    `;
  }

  html() {
    return `<div class="grip"></div><button aria-label="键盘">${icon('keyboard')}</button><button aria-label="语言帮助">${icon('helpNavy')}</button><button class="opts" aria-label="选项"></button>`;
  }
}

class TaskBar extends Part {
  css() {
    return `
      :host {
        background: linear-gradient(100deg, #0b2346 0, #183f70 8%, #13355f 50%, #062a5c 62%, #183d70 66%, #062a5c 72%, #0a2a56 90%, #0a1c38);
        border-top: 1px solid #0b1a30;
        box-shadow: inset 0 1px #6f8fb5;
        color: #fff;
        display: flex;
        flex: none;
        height: 39px;
      }
      .start { margin: 0 14px 0 8px; }
      .apps { display: flex; gap: 4px; padding-top: 1px; }
      .apps button {
        background: linear-gradient(160deg, #7f93ad 0, #3d5980 45%, #274670 50%, #34557f);
        border: 1px solid #8da2bd;
        border-radius: 3px;
        height: 38px;
        outline: 1px solid #081a35;
        outline-offset: 0;
        width: 58px;
      }
      .apps .more { border-right: 5px double #8da2bd; }
      .apps .on { background: linear-gradient(160deg, #d3dae5, #9dafc7 50%, #8ba1bd); }
      .tray { align-items: center; display: flex; gap: 9px; margin-left: auto; }
      time { line-height: 18px; text-align: center; margin: 0 3px; }
      .desk { align-self: stretch; background: linear-gradient(135deg, #56708f, #1b2f4c 60%); border: 1px solid #7f93ad; margin-left: -5px; width: 14px; }
    `;
  }

  html() {
    const apps = [
      ['shell'], ['doc'], ['gred'], ['floppy'], ['pgreen'], ['word', 'more'], ['excel', 'more on'],
      ['ding'], ['note'], ['disc'], ['xman', 'more'], ['disc'],
    ];
    return `
      <button class="start" aria-label="开始">${icon('start')}</button>
      <div class="apps">${apps.map(([name, cls = '']) => `<button class="${cls}" aria-label="${name}">${icon(name)}</button>`).join('')}</div>
      <div class="tray">
        ${icon('up')}${icon('flag')}${icon('volume')}${icon('network')}
        <time>0:05<br>2022/10/18</time>
        <button class="desk" aria-label="显示桌面"></button>
      </div>`;
  }
}

class ExcelApp extends Part {
  css() {
    return `
      :host { display: flex; flex-direction: column; height: 100vh; position: relative; }
      .pen { left: 0; pointer-events: none; position: absolute; top: 0; }
      language-bar { bottom: 50px; position: absolute; right: 100px; }
    `;
  }

  html() {
    return `
      <title-bar></title-bar>
      <ribbon-tabs></ribbon-tabs>
      <ribbon-bar></ribbon-bar>
      <message-bar></message-bar>
      <formula-bar></formula-bar>
      <sheet-grid></sheet-grid>
      <sheet-tabs></sheet-tabs>
      <status-bar></status-bar>
      <task-bar></task-bar>
      <language-bar></language-bar>
      <svg class="pen" width="1160" height="800" aria-hidden="true">
        <path d="M1148 719L440 779" stroke="#0f0" stroke-width="5" stroke-linecap="round"/>
        <path d="M413 780l28-9 2 16z" fill="#0f0"/>
      </svg>`;
  }
}

customElements.define('ui-icon', UiIcon);
customElements.define('title-bar', TitleBar);
customElements.define('ribbon-tabs', RibbonTabs);
customElements.define('ribbon-group', RibbonGroup);
customElements.define('style-gallery', StyleGallery);
customElements.define('ribbon-bar', RibbonBar);
customElements.define('message-bar', MessageBar);
customElements.define('formula-bar', FormulaBar);
customElements.define('sheet-grid', SheetGrid);
customElements.define('sheet-tabs', SheetTabs);
customElements.define('status-bar', StatusBar);
customElements.define('language-bar', LanguageBar);
customElements.define('task-bar', TaskBar);
customElements.define('excel-app', ExcelApp);
</script>
</body>
</html>
